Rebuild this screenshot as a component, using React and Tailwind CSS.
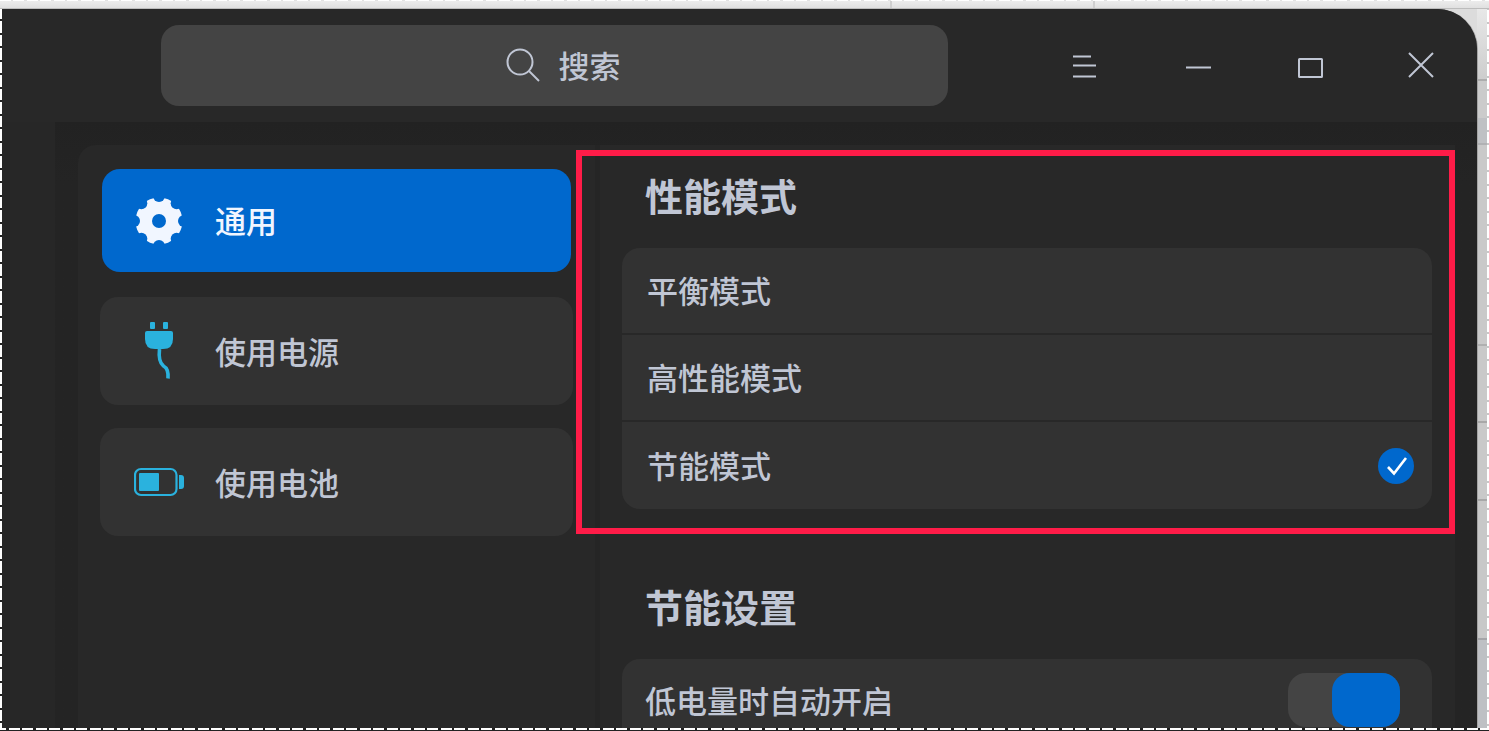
import React, { useState } from "react";

function GearIcon() {
  const notches = [0, 45, 90, 135, 180, 225, 270, 315];
  return (
    <svg width="50" height="50" viewBox="0 0 50 50" aria-hidden="true">
      <defs>
        <mask id="gear">
          <circle cx="25" cy="25" r="23.5" fill="white" />
          <circle cx="25" cy="25" r="7" fill="black" />
          {notches.map((a) => (
            <circle key={a} cx="25" cy="0" r="6" fill="black" transform={`rotate(${a} 25 25)`} />
          ))}
        </mask>
      </defs>
      <rect width="50" height="50" fill="#f1f6ff" mask="url(#gear)" />
    </svg>
  );
}

function PlugIcon() {
  return (
    <svg width="50" height="60" viewBox="0 0 50 60" fill="#2ab2de" aria-hidden="true">
      <rect x="16" y="1" width="5" height="7" rx="1" />
      <rect x="29" y="1" width="5" height="7" rx="1" />
      <path d="M13 10h24q2 0 2 2v6q0 10-10 10h-8q-10 0-10-10v-6q0-2 2-2z" />
      <path d="M25.5 28c-1 9 0 14 4 17 4 2 5 6 4.500 12.500" fill="none" stroke="#2ab2de" strokeWidth="3.6" />
    </svg>
  );
}

function BatteryIcon() {
  return (
    <svg width="50" height="30" viewBox="0 0 50 30" aria-hidden="true">
      <rect x="1" y="2" width="41.500" height="26" rx="6" fill="none" stroke="#2ab2de" strokeWidth="2.2" />
      <rect x="5" y="6" width="20" height="18" rx="1" fill="#2ab2de" />
      <path d="M45 8h2q3 0 3 3v8q0 3-3 3h-2z" fill="#2ab2de" />
    </svg>
  );
}

const NAV = [
  { id: "general", label: "通用", Icon: GearIcon },
  { id: "power", label: "使用电源", Icon: PlugIcon },
  { id: "battery", label: "使用电池", Icon: BatteryIcon },
];

const MODES = ["平衡模式", "高性能模式", "节能模式"];

function WindowButton({ label, children }) {
  return (
    <button type="button" aria-label={label} className="flex h-full w-28 items-center justify-center">
      <svg width="30" height="30" viewBox="0 0 30 30" fill="none" stroke="#c0c6d4" strokeWidth="2">
        {children}
      </svg>
    </button>
  );
}

function TitleBar() {
  return (
    <header className="flex h-[113px] shrink-0 items-center bg-[#282828] pl-[159px]">
      <label className="mr-[81px] flex h-[81px] flex-1 items-center justify-center gap-[18px] rounded-[18px] bg-[#444444] pb-0.5 pl-[18px]">
        <svg width="36" height="36" viewBox="0 0 36 36" fill="none" stroke="#c0c6d4" strokeWidth="2" aria-hidden="true">
          <circle cx="15" cy="15" r="12.5" />
          <path d="M24 24l10 10" />
        </svg>
        <input
          type="text"
          aria-label="搜索"
          placeholder="搜索"
          className="w-16 bg-transparent text-[31px] leading-10 font-medium text-[#c0c6d4] outline-none placeholder:text-[#c0c6d4]"
        />
      </label>
      <WindowButton label="菜单">
        <path d="M3 5.500h18M3 14.500h23M3 25.500h23" />
      </WindowButton>
      <WindowButton label="最小化">
        <path d="M4 16.500h25" />
      </WindowButton>
      <WindowButton label="最大化">
        <rect x="5" y="8" width="23" height="18" rx="0.5" />
      </WindowButton>
      <WindowButton label="关闭">
        <path d="M3 2l24 24M27 2L3 26" />
      </WindowButton>
    </header>
  );
}

function Sidebar({ current, onSelect }) {
  return (
    <nav className="flex w-[517px] shrink-0 flex-col gap-[23px] rounded-tl-[18px] bg-[#282828] px-[22px] pt-[22px]">
      {NAV.map(({ id, label, Icon }) => (
        <button
          key={id}
          type="button"
          onClick={() => onSelect(id)}
          className={
            current === id
              ? "m-0.5 flex h-[103px] items-center gap-[31px] rounded-[18px] bg-[#0068cd] pl-8 text-[31px] font-medium text-[#f1f6ff]"
              : "flex h-[108px] items-center gap-[31px] rounded-[18px] bg-[#323232] pl-[34px] text-[31px] font-medium text-[#c0c6d4]"
          }
        >
          <Icon />
          {label}
        </button>
      ))}
    </nav>
  );
}

function ModeSection() {
  const [mode, setMode] = useState("节能模式");
  return (
    <section className="relative h-[389px] pt-[26px] pr-[23px] pl-[22px]">
      <h2 className="pl-[23px] text-[38px] leading-[48px] font-bold">性能模式</h2>
      <div className="mt-[29px] flex flex-col gap-0.5 overflow-hidden rounded-[18px]">
        {MODES.map((name) => (
          <label
            key={name}
            className="flex h-[85px] items-center justify-between bg-[#323232] pr-[18px] pl-[25px] text-[31px] font-medium last:h-[87px]"
          >
            {name}
            <input
              type="radio"
              name="mode"
              className="peer sr-only"
              checked={mode === name}
              onChange={() => setMode(name)}
            />
            <svg className="hidden peer-checked:block" width="36" height="36" viewBox="0 0 36 36" aria-hidden="true">
              <circle cx="18" cy="18" r="18" fill="#0068cd" />
              <path d="M10 19l6 6.500L28 10" fill="none" stroke="white" strokeWidth="2.6" />
            </svg>
          </label>
        ))}
      </div>
      <div className="pointer-events-none absolute top-[5px] right-0 bottom-0 -left-6 border-6 border-[#ff1c48]" />
    </section>
  );
}

function SavingSection() {
  const [auto, setAuto] = useState(true);
  return (
    <section className="pt-[48px] pr-[23px] pl-[22px]">
      <h2 className="pl-[23px] text-[38px] leading-[48px] font-bold">节能设置</h2>
      <div className="mt-[29px] rounded-[18px] bg-[#323232] pb-8">
        <label className="flex items-center justify-between pt-[14px] pr-8 pl-[23px] text-[31px] font-medium">
          低电量时自动开启
          <input
            type="checkbox"
            role="switch"
            className="peer sr-only"
            checked={auto}
            onChange={() => setAuto(!auto)}
          />
          <span className="flex h-[54px] w-[112px] justify-start rounded-[18px] bg-[#444444] peer-checked:justify-end">
            <span className="w-[68px] rounded-[18px] bg-[#0068cd]" />
          </span>
        </label>
      </div>
    </section>
  );
}

export default function App() {
  const [page, setPage] = useState("general");
  return (
    <div className="flex h-screen flex-col overflow-hidden bg-[#dcdcdc] font-['Noto_Sans_CJK_SC',sans-serif] text-[#c0c6d4]">
      <div className="h-[9px] shrink-0 border-b border-[#bcbcbc] bg-[linear-gradient(90deg,transparent_890px,#cfcfcf_890px_892px,transparent_892px_1093px,#cfcfcf_1093px_1095px,transparent_1095px),linear-gradient(180deg,#eeeeee,#e0e0e0)]">
        <div className="h-px bg-[repeating-linear-gradient(90deg,#fff_0px_11px,#e2e2e2_11px_13px,#fff_13px_24px,#e2e2e2_24px_27px)]" />
      </div>
      <div className="flex min-h-0 flex-1">
        <div className="w-0.5 shrink-0 bg-[repeating-linear-gradient(180deg,#fff_0px_10px,#222_10px_12px,#fff_12px_24px,#222_24px_26px,#fff_26px_27px)]" />
        <div className="relative z-10 flex min-w-0 flex-1 flex-col overflow-hidden rounded-tr-[40px] bg-[#282828] shadow-[1px_0_0_#a4a4a4]">
          <TitleBar />
          <div className="flex min-h-0 flex-1 bg-[#272727] pl-[53px]">
            <div className="flex min-w-0 flex-1 bg-linear-to-b from-[#222222] to-[#242424] to-10% pt-[23px] pr-[22px] pl-[23px]">
              <Sidebar current={page} onSelect={setPage} />
              <main className="min-w-0 flex-1 border-l-5 border-[#252525] bg-[#282828]">
                <ModeSection />
                <SavingSection />
              </main>
            </div>
          </div>
        </div>
        <div className="w-2.5 shrink-0 bg-[linear-gradient(180deg,#e8e8e8_0px,#cdcdcd_70px,#adadad_70px_72px,#cbcbcb_72px_109px,#bfc1c4_109px_134px,#b0b1b3_134px_136px,#c9c9c9_136px_335px,#b0b0b0_335px_337px,#c9c9c9_337px_412px,#a8a8a8_412px_414px,#c9c9c9_414px_490px,#a8a8a8_490px_492px,#c8c8c8_492px_629px,#a4a5a8_629px_631px,#bec0c4_631px)]" />
        <div className="w-0.5 shrink-0 bg-[repeating-linear-gradient(180deg,#c8c8c8_0px_1px,#fff_1px_13px,#c8c8c8_13px_15px,#fff_15px_26px,#c8c8c8_26px_27px)]" />
      </div>
      <div className="h-[3px] shrink-0 border-b border-[#222] bg-[repeating-linear-gradient(90deg,#fff_0px_6px,#222_6px_9px,#fff_9px_20px,#222_20px_22px,#fff_22px_27px)]" />
    </div>
  );
}
